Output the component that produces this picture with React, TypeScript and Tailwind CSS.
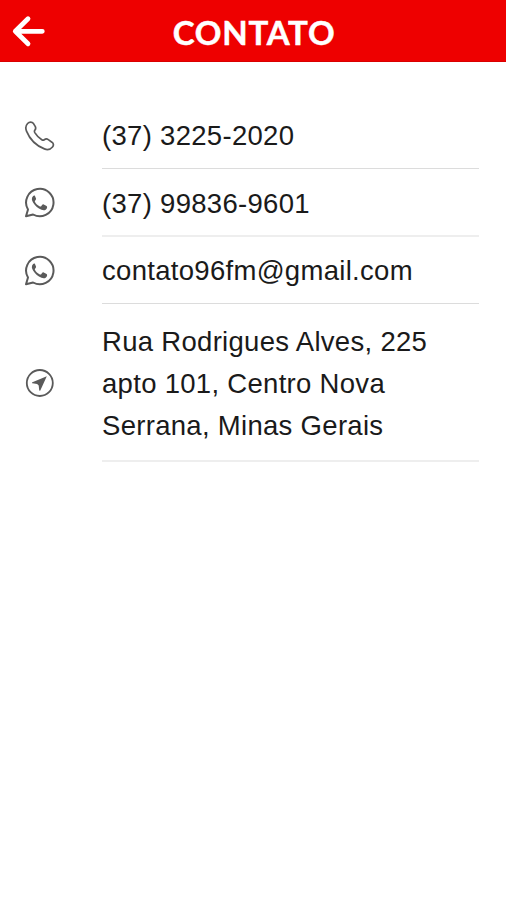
import { ReactNode } from "react";

type Contact = {
  icon: ReactNode;
  text: string;
  rowClass: string;
};

const iconClass = "size-8 shrink-0 text-[#5a5a5a]";

const ArrowLeftIcon = () => (
  <svg
    viewBox="0 0 36 36"
    className="size-9"
    fill="none"
    stroke="currentColor"
    strokeWidth="4.8"
    strokeLinecap="round"
    strokeLinejoin="round"
  >
    <path d="M18 5.7 5.3 18.3 18 30.8M5.3 18.3h27" />
  </svg>
);

const PhoneIcon = () => (
  <svg
    viewBox="0 0 32 32"
    className={iconClass}
    fill="none"
    stroke="currentColor"
    strokeWidth="1.7"
    strokeLinejoin="round"
  >
    <path d="M3.6 3.5C5.3 1.7 8 1.6 9.5 3.6l1.7 2.8c.8 1.5.6 2.7-.4 3.9-.5.7-.5 1.4 0 2.300 1.900 3.100 4 5.300 7 7.200.9.600 1.700.6 2.500 0 1.300-1 2.600-1.100 4-.2l3.600 2.600c1.800 1.400 2 3.200.6 4.800-2.100 2.500-4.900 3.200-8.100 1.900C12.600 25.800 5.600 18.800 2.500 11.100 1.300 8.100 1.700 5.500 3.600 3.500Z" />
  </svg>
);

const WhatsappIcon = () => (
  <svg viewBox="0 0 32 32" className={iconClass} fill="none">
    <path
      d="M2 29.200 4 22.500A13.700 13.700 0 1 1 9.100 27.500Z"
      stroke="currentColor"
      strokeWidth="2"
      strokeLinejoin="round"
    />
    <path
      d="M10.900 8.800c-.5-.4-1.300-.2-1.800.3-1.800 1.900-1.600 4.200.1 6.700 2.100 3.200 4.700 5.600 8.300 7 2.700 1 4.700.2 5.400-1.600.4-1 .3-1.900-.3-2.300l-2.900-1.500c-.6-.3-1-.1-1.500.4l-1 1.400c-.3.400-.7.400-1.300.2-2.300-1-4-2.700-5-4.700-.2-.4-.1-.7.2-1l.8-1.200c.2-.3.2-.6.100-1Z"
      fill="currentColor"
    />
  </svg>
);

const LocationIcon = () => (
  <svg viewBox="0 0 32 32" className={iconClass} fill="none">
    <circle cx="15.800" cy="16" r="13" stroke="currentColor" strokeWidth="1.800" />
    <path
      d="M22.800 9.200 8.400 15.200c-.6.3-.5 1 .1 1.100l4.600.6 1.600 1.700.5 4.700c.1.6.8.7 1.100.1Z"
      fill="currentColor"
    />
  </svg>
);

const contacts: Contact[] = [
  {
    icon: <PhoneIcon />,
    text: "(37) 3225-2020",
    rowClass: "h-[67px] border-b border-[#dcdcdc] pt-0.5",
  },
  {
    icon: <WhatsappIcon />,
    text: "(37) 99836-9601",
    rowClass: "h-[68px] border-b-2 border-[#eeeeee] pt-1",
  },
  {
    icon: <WhatsappIcon />,
    text: "contato96fm@gmail.com",
    rowClass: "h-[67px] border-b border-[#dcdcdc] pt-0.5",
  },
  {
    icon: <LocationIcon />,
    text: "Rua Rodrigues Alves, 225 apto 101, Centro Nova Serrana, Minas Gerais",
    rowClass: "h-[158px] border-b-2 border-[#eeeeee] pt-1",
  },
];

export default function App() {
  return (
    <div className="min-h-screen w-full bg-white font-['Liberation_Sans',Arial,sans-serif]">
      <header className="grid h-[62px] grid-cols-[1fr_auto_1fr] items-center border-b border-[#d90000] bg-[#ee0000] px-2.5 text-white">
        <button aria-label="Voltar" className="w-fit">
          <ArrowLeftIcon />
        </button>
        <h1 className="pt-1 pl-0.5 font-['Lato',sans-serif] text-[33px] leading-none font-bold tracking-[0.8px] [-webkit-text-stroke:0.5px_white]">
          CONTATO
        </h1>
      </header>

      <ul className="pt-10 pr-[27px] pl-6">
        {contacts.map(({ icon, text, rowClass }) => (
          <li key={text} className="flex items-center">
            {icon}
            <div className={`ml-[46px] flex flex-1 items-center ${rowClass}`}>
              <p className="text-[27.5px] leading-[42px] tracking-[0.3px] text-[#1a1a1a]">
                {text}
              </p>
            </div>
          </li>
        ))}
      </ul>
    </div>
  );
}
